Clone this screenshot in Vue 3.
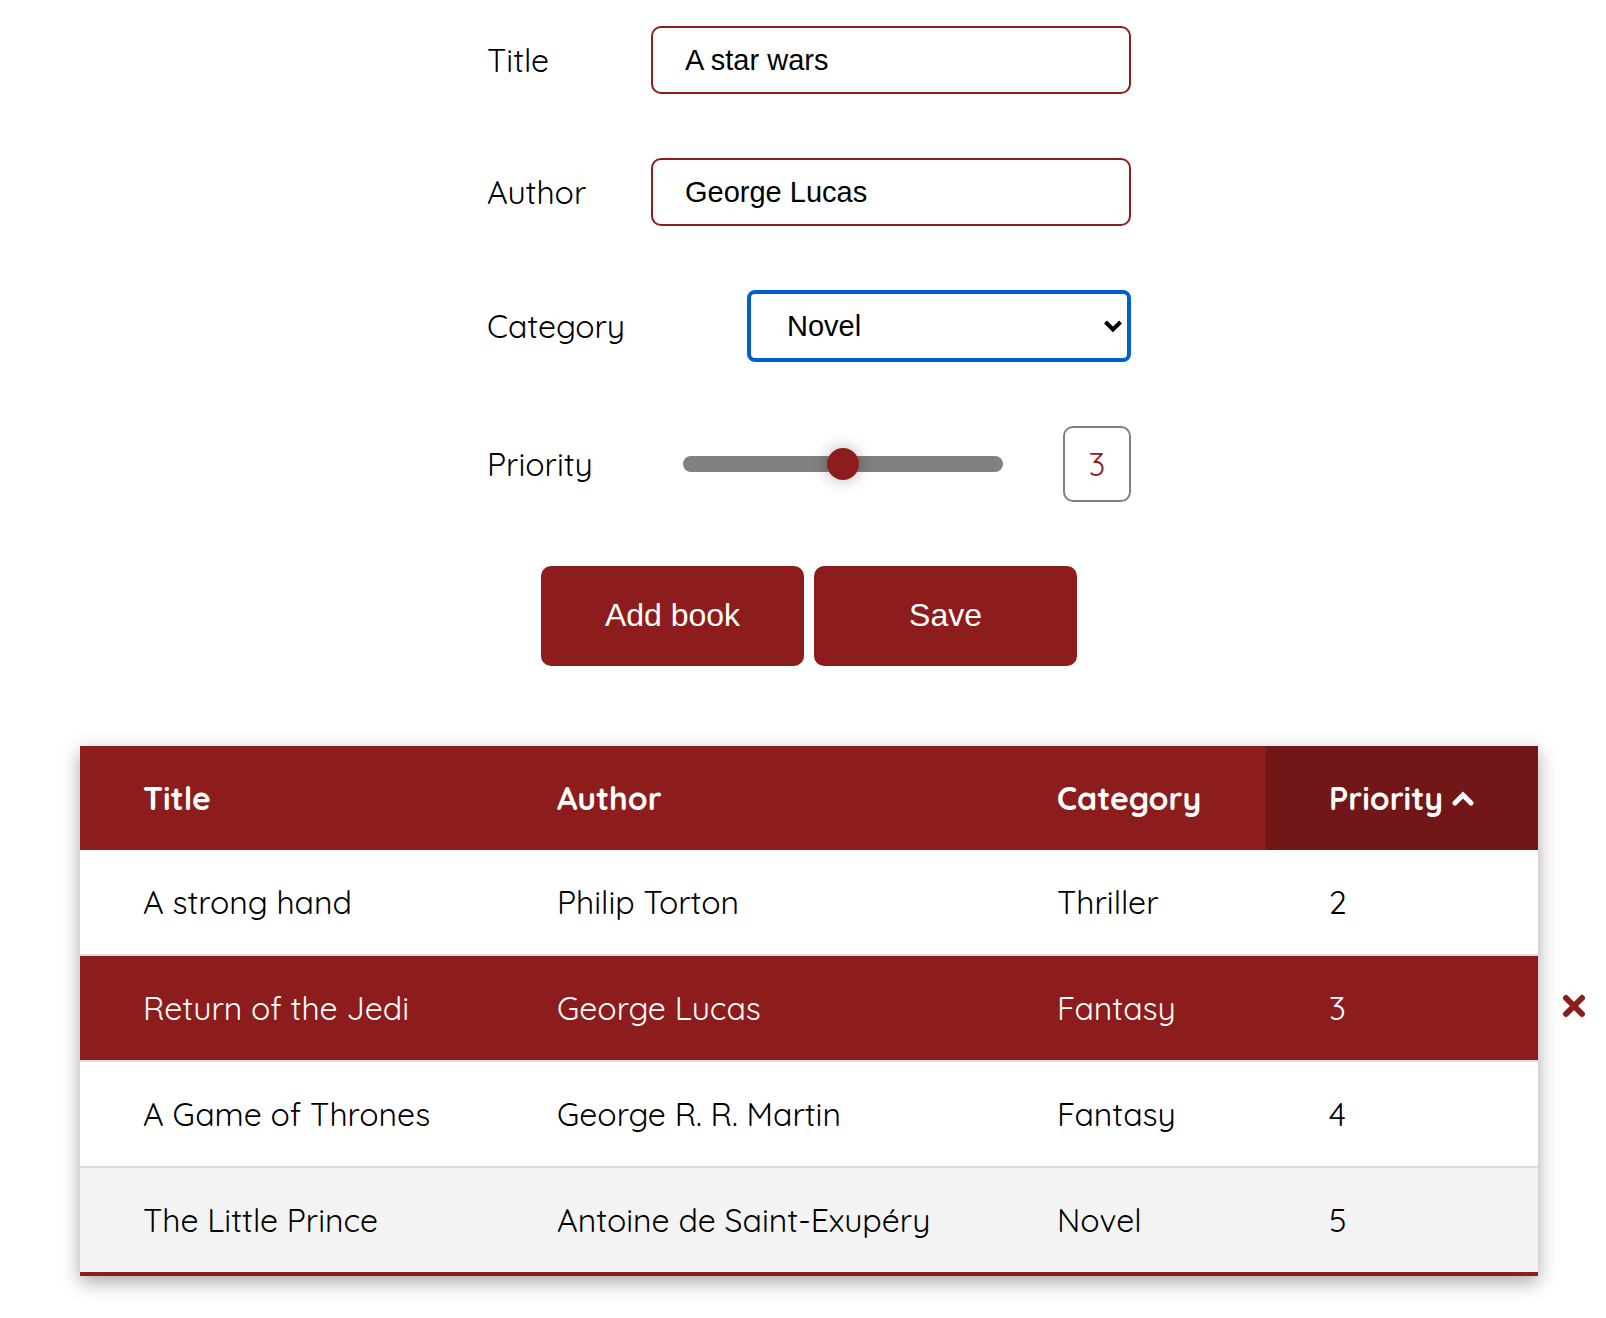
<script setup>
import { ref } from 'vue'

const title = ref('A star wars')
const author = ref('George Lucas')
const category = ref('Novel')
const priority = ref(3)
const selected = ref(1)

const categories = ['Novel', 'Fantasy', 'Thriller']
const columns = ['Title', 'Author', 'Category', 'Priority']
const books = ref([
  { title: 'A strong hand', author: 'Philip Torton', category: 'Thriller', priority: 2 },
  { title: 'Return of the Jedi', author: 'George Lucas', category: 'Fantasy', priority: 3 },
  { title: 'A Game of Thrones', author: 'George R. R. Martin', category: 'Fantasy', priority: 4 },
  { title: 'The Little Prince', author: 'Antoine de Saint-Exupéry', category: 'Novel', priority: 5 },
])

function addBook() {
  books.value.push({
    title: title.value,
    author: author.value,
    category: category.value,
    priority: Number(priority.value),
  })
}

function save() {
  Object.assign(books.value[selected.value] ?? {}, {
    title: title.value,
    author: author.value,
    category: category.value,
    priority: Number(priority.value),
  })
}

function remove(index) {
  books.value.splice(index, 1)
}
</script>

<template>
  <main class="page">
    <form class="form" @submit.prevent="addBook">
      <div class="field">
        <label for="title">Title</label>
        <input id="title" v-model="title" class="text" type="text" />
      </div>
      <div class="field">
        <label for="author">Author</label>
        <input id="author" v-model="author" class="text" type="text" />
      </div>
      <div class="field">
        <label for="category">Category</label>
        <div class="select">
          <select id="category" v-model="category">
            <option v-for="name in categories" :key="name">{{ name }}</option>
          </select>
          <svg class="arrow" viewBox="0 0 20 14" aria-hidden="true">
            <path d="M2.5 3 L10 10.5 L17.5 3" />
          </svg>
        </div>
      </div>
      <div class="field">
        <label for="priority">Priority</label>
        <div class="range">
          <input id="priority" v-model="priority" type="range" min="1" max="5" />
          <output for="priority">{{ priority }}</output>
        </div>
      </div>
      <div class="actions">
        <button type="submit">Add book</button>
        <button type="button" @click="save">Save</button>
      </div>
    </form>

    <table class="books">
      <colgroup>
        <col class="col-title" />
        <col class="col-author" />
        <col class="col-category" />
        <col class="col-priority" />
      </colgroup>
      <thead>
        <tr>
          <th v-for="name in columns" :key="name" scope="col" :class="{ sorted: name === 'Priority' }">
            {{ name }}
            <svg v-if="name === 'Priority'" class="caret" viewBox="0 0 22 16" aria-hidden="true">
              <path d="M3 12 L11 4 L19 12" />
            </svg>
          </th>
        </tr>
      </thead>
      <tbody>
        <tr
          v-for="(book, index) in books"
          :key="book.title"
          :class="{ active: index === selected }"
          @click="selected = index"
        >
          <td>{{ book.title }}</td>
          <td>{{ book.author }}</td>
          <td>{{ book.category }}</td>
          <td>
            {{ book.priority }}
            <button
              v-if="index === selected"
              class="remove"
              type="button"
              aria-label="Delete book"
              @click.stop="remove(index)"
            >
              <svg viewBox="0 0 24 24" aria-hidden="true">
                <path d="M4 4 L20 20 M20 4 L4 20" />
              </svg>
            </button>
          </td>
        </tr>
      </tbody>
    </table>
  </main>
</template>

<style>
body {
  background: #fff;
}
</style>

<style scoped>
.page {
  --red: #8d1d1d;
  box-sizing: border-box;
  padding: 26px 68px 42px 80px;
  color: #000;
  font-family: Quicksand, Lato, sans-serif;
  font-size: 32px;
  line-height: 40px;
}

.form {
  display: flex;
  flex-direction: column;
  gap: 64px;
  max-width: 644px;
  margin: 0 auto 80px;
}

.field {
  display: flex;
  align-items: center;
  justify-content: space-between;
}

.text,
select {
  box-sizing: border-box;
  background: #fff;
  color: #000;
  font-family: "Liberation Sans", Arial, sans-serif;
  font-size: 29px;
}

.text {
  width: 480px;
  height: 68px;
  padding: 0 32px;
  border: 2px solid var(--red);
  border-radius: 10px;
  outline: none;
}

.select {
  position: relative;
  width: 384px;
}

select {
  display: block;
  width: 100%;
  height: 72px;
  padding: 0 36px;
  border: 4px solid #005fd0;
  border-radius: 8px;
  outline: none;
  appearance: none;
}

.arrow {
  position: absolute;
  top: 29px;
  right: 8px;
  width: 20px;
  height: 14px;
  pointer-events: none;
}

.arrow path {
  fill: none;
  stroke: #000;
  stroke-width: 4;
}

.range {
  display: flex;
  align-items: center;
  gap: 60px;
}

input[type="range"] {
  width: 320px;
  height: 16px;
  margin: 0;
  border-radius: 8px;
  background: #808080;
  outline: none;
  appearance: none;
}

input[type="range"]::-webkit-slider-thumb {
  width: 32px;
  height: 32px;
  border-radius: 50%;
  background: var(--red);
  box-shadow: 0 0 16px rgba(0, 0, 0, 0.3);
  appearance: none;
}

output {
  box-sizing: border-box;
  width: 68px;
  padding: 16px 0;
  border: 2px solid #808080;
  border-radius: 10px;
  color: var(--red);
  text-align: center;
}

.actions {
  display: flex;
  justify-content: center;
  gap: 10px;
}

.actions button {
  width: 263px;
  height: 100px;
  padding: 0 0 2px;
  border: 0;
  border-radius: 10px;
  background: var(--red);
  color: #fff;
  font-family: "Liberation Sans", Arial, sans-serif;
  font-size: 32px;
}

.books {
  width: 100%;
  border-collapse: separate;
  border-spacing: 0;
  border-bottom: 4px solid var(--red);
  box-shadow: 0 6px 18px rgba(0, 0, 0, 0.35);
  table-layout: fixed;
}

.col-title {
  width: 414px;
}

.col-category,
.col-priority {
  width: 272px;
}

th,
td {
  padding: 32px 0 32px 63px;
  text-align: left;
  white-space: nowrap;
}

th {
  background: var(--red);
  color: #fff;
  font-weight: 700;
}

.sorted {
  background: #711717;
}

.caret {
  width: 22px;
  height: 16px;
  vertical-align: 3px;
}

.caret path {
  fill: none;
  stroke: #fff;
  stroke-width: 5;
  stroke-linecap: round;
  stroke-linejoin: miter;
}

td {
  position: relative;
  border-bottom: 2px solid #ddd;
}

tbody tr {
  background: #fff;
}

tbody tr:nth-child(even) {
  background: #f3f3f3;
}

tbody tr:last-child td {
  border-bottom: 0;
}

tbody tr.active {
  background: var(--red);
  color: #fff;
}

.remove {
  position: absolute;
  top: 38px;
  right: -48px;
  width: 24px;
  height: 24px;
  padding: 0;
  border: 0;
  background: none;
}

.remove svg {
  display: block;
  width: 24px;
  height: 24px;
}

.remove path {
  stroke: var(--red);
  stroke-width: 6;
  stroke-linecap: round;
}
</style>
